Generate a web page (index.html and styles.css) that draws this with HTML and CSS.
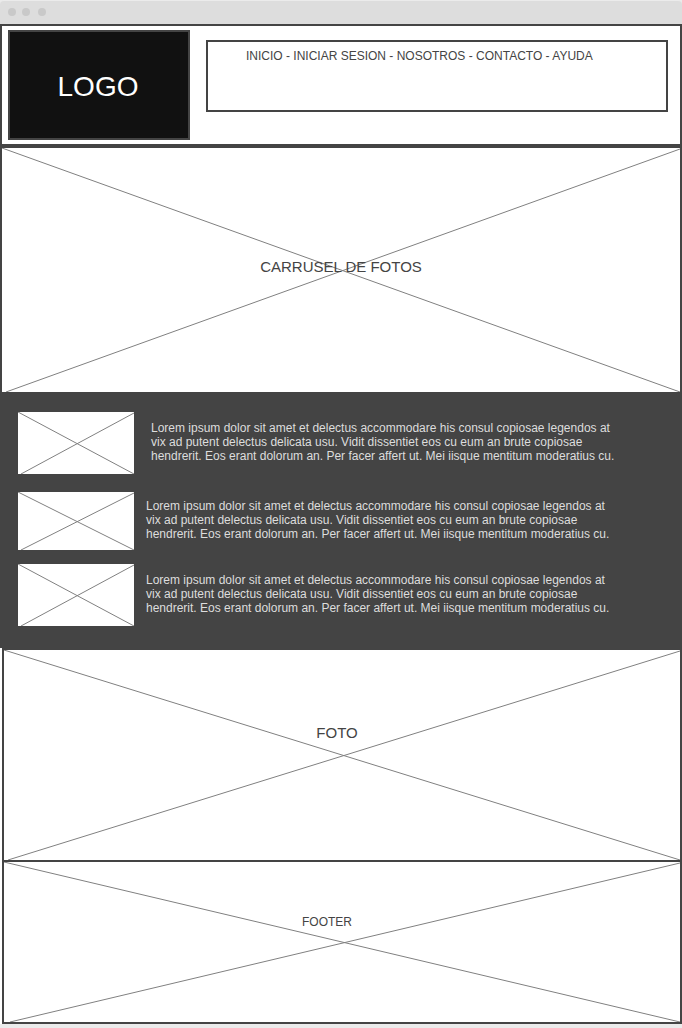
FILE: index.html
```html
<!DOCTYPE html>
<html lang="es">
<head>
<meta charset="utf-8">
<meta name="viewport" content="width=device-width, initial-scale=1">
<title>Inicio</title>
<link rel="stylesheet" href="styles.css">
</head>
<body>
<div class="chrome" aria-hidden="true">
  <span class="dot"></span><span class="dot"></span><span class="dot dot-last"></span>
</div>
<div class="upper">
  <header class="header">
    <div class="logo">LOGO</div>
    <nav class="nav">
      <a href="#inicio">INICIO</a> - <a href="#sesion">INICIAR SESION</a> - <a href="#nosotros">NOSOTROS</a> - <a href="#contacto">CONTACTO</a> - <a href="#ayuda">AYUDA</a>
    </nav>
  </header>
  <section class="placeholder carousel">
    <svg class="cross" aria-hidden="true"><line x1="0" y1="0" x2="100%" y2="100%"/><line x1="4" y1="100%" x2="100%" y2="1"/></svg>
    <h1 class="caption">CARRUSEL DE FOTOS</h1>
  </section>
</div>
<main class="articles">
  <article class="article article-first">
    <div class="placeholder thumb"><svg class="cross" aria-hidden="true"><line x1="0" y1="0" x2="100%" y2="100%"/><line x1="3" y1="100%" x2="100%" y2="1"/></svg></div>
    <p class="text">Lorem ipsum dolor sit amet et delectus accommodare his consul copiosae legendos at vix ad putent delectus delicata usu. Vidit dissentiet eos cu eum an brute copiosae hendrerit. Eos erant dolorum an. Per facer affert ut. Mei iisque mentitum moderatius cu.</p>
  </article>
  <article class="article article-short">
    <div class="placeholder thumb"><svg class="cross" aria-hidden="true"><line x1="0" y1="0" x2="100%" y2="100%"/><line x1="3" y1="100%" x2="100%" y2="1"/></svg></div>
    <p class="text">Lorem ipsum dolor sit amet et delectus accommodare his consul copiosae legendos at vix ad putent delectus delicata usu. Vidit dissentiet eos cu eum an brute copiosae hendrerit. Eos erant dolorum an. Per facer affert ut. Mei iisque mentitum moderatius cu.</p>
  </article>
  <article class="article">
    <div class="placeholder thumb"><svg class="cross" aria-hidden="true"><line x1="0" y1="0" x2="100%" y2="100%"/><line x1="3" y1="100%" x2="100%" y2="1"/></svg></div>
    <p class="text">Lorem ipsum dolor sit amet et delectus accommodare his consul copiosae legendos at vix ad putent delectus delicata usu. Vidit dissentiet eos cu eum an brute copiosae hendrerit. Eos erant dolorum an. Per facer affert ut. Mei iisque mentitum moderatius cu.</p>
  </article>
</main>
<div class="lower">
  <section class="placeholder photo">
    <svg class="cross" aria-hidden="true"><line x1="0" y1="0" x2="100%" y2="100%"/><line x1="4" y1="100%" x2="100%" y2="1"/></svg>
    <h2 class="caption">FOTO</h2>
  </section>
  <footer class="placeholder footer">
    <svg class="cross" aria-hidden="true"><line x1="0" y1="0" x2="100%" y2="100%"/><line x1="6" y1="100%" x2="100%" y2="1"/></svg>
    <p class="caption caption-small">FOOTER</p>
  </footer>
</div>
</body>
</html>
```
FILE: styles.css
```css
:root {
  --line: #444;
}

* {
  box-sizing: border-box;
}

body {
  margin: 0;
  background: #ebebeb;
  color: var(--line);
  font: 12px/14px "Liberation Sans", Arial, sans-serif;
}

.chrome {
  display: flex;
  gap: 6px;
  height: 24px;
  padding: 7px 8px 0;
  background: #ddd;
  border-top: 1px solid #ebebeb;
  border-radius: 4px 4px 0 0;
}

.dot {
  width: 8px;
  height: 8px;
  border-radius: 50%;
  background: #c9c9c9;
}

.dot-last {
  margin-left: 2px;
}

.upper {
  background: #fff;
  border: 2px solid var(--line);
  border-bottom: 0;
}

.header {
  display: flex;
  align-items: flex-start;
  gap: 16px;
  padding: 4px 12px 4px 6px;
  border-bottom: 4px solid var(--line);
}

.logo {
  display: flex;
  align-items: center;
  justify-content: center;
  width: 182px;
  height: 110px;
  padding: 4px 2px 0 0;
  border: 2px solid var(--line);
  background: #111;
  color: #fff;
  font-size: 28px;
  line-height: 32px;
}

.nav {
  flex: 1;
  min-height: 72px;
  margin-top: 10px;
  padding: 7px 38px;
  border: 2px solid var(--line);
}

.nav a {
  color: inherit;
  text-decoration: none;
}

.placeholder {
  position: relative;
  display: flex;
  align-items: center;
  justify-content: center;
  background: #fff;
}

.cross {
  position: absolute;
  inset: 0;
  width: 100%;
  height: 100%;
  stroke: #808080;
  stroke-width: 1;
}

.caption {
  position: relative;
  margin: 0;
  font-size: 15px;
  font-weight: normal;
  line-height: 18px;
}

.caption-small {
  font-size: 12px;
  line-height: 14px;
}

.carousel {
  min-height: 244px;
  padding-bottom: 6px;
}

.articles {
  display: grid;
  gap: 14px;
  padding: 20px 18px 22px;
  background: var(--line);
  color: #ddd;
}

.article {
  display: flex;
  align-items: center;
  gap: 12px;
}

.article-first {
  gap: 17px;
  margin-bottom: 4px;
}

.thumb {
  flex: none;
  width: 116px;
  height: 62px;
}

.article-short .thumb {
  height: 58px;
}

.text {
  max-width: 475px;
  margin: 0;
  padding-bottom: 2px;
}

.lower {
  margin-bottom: 4px;
  background: #fff;
  border-left: 2px solid #fff;
}

.photo,
.footer {
  border: 2px solid var(--line);
}

.photo {
  min-height: 214px;
  padding: 0 10px 44px 0;
}

.footer {
  min-height: 162px;
  border-top: 0;
  padding: 0 30px 40px 0;
}
```
